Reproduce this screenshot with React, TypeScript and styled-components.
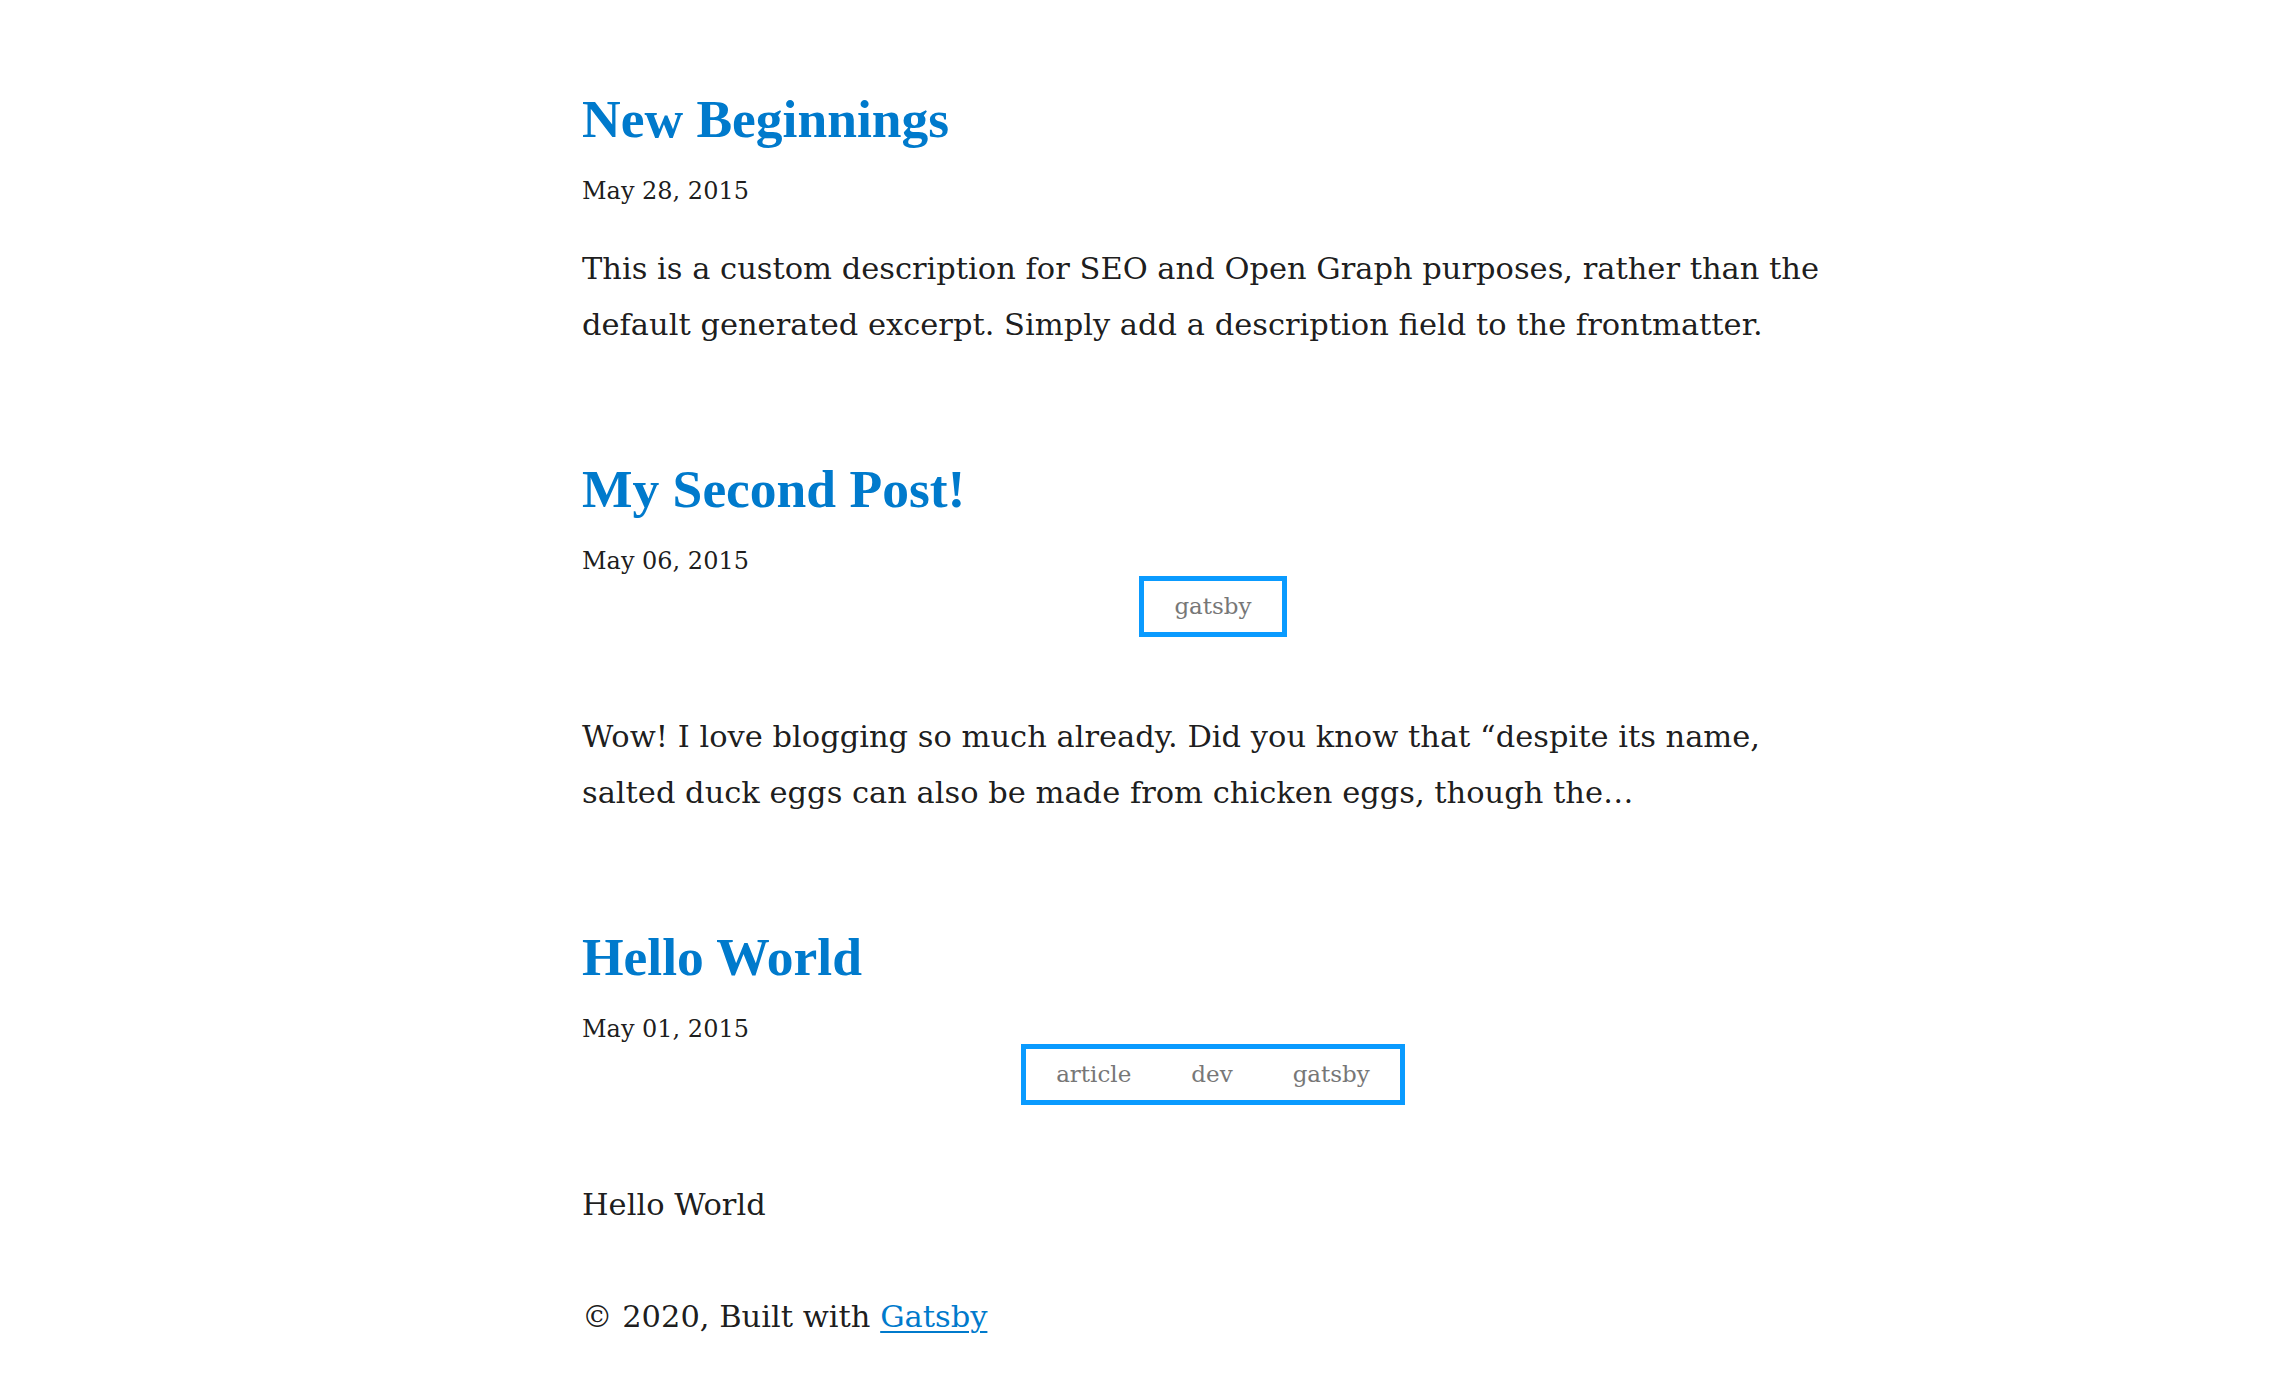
import styled, { createGlobalStyle } from "styled-components";

const posts = [
  {
    title: "New Beginnings",
    date: "May 28, 2015",
    tags: [] as string[],
    excerpt:
      "This is a custom description for SEO and Open Graph purposes, rather than the default generated excerpt. Simply add a description field to the frontmatter.",
  },
  {
    title: "My Second Post!",
    date: "May 06, 2015",
    tags: ["gatsby"],
    excerpt:
      "Wow! I love blogging so much already. Did you know that \u201cdespite its name, salted duck eggs can also be made from chicken eggs, though the\u2026",
  },
  {
    title: "Hello World",
    date: "May 01, 2015",
    tags: ["article", "dev", "gatsby"],
    excerpt: "Hello World",
  },
];

const GlobalStyle = createGlobalStyle`
  html, body {
    margin: 0;
    padding: 0;
    background: #ffffff;
  }
  body {
    font-family: "DejaVu Serif", "Liberation Serif", serif;
    color: rgba(0, 0, 0, 0.9);
  }
`;

const App = () => {
  return (
    <>
      <GlobalStyle />
      <Layout>
        <PostList>
          {posts.map((post) => (
            <Post key={post.title}>
              <PostTitle href="#">{post.title}</PostTitle>
              <PostDate>{post.date}</PostDate>
              {post.tags.length > 0 && (
                <TagBox>
                  {post.tags.map((tag) => (
                    <Tag key={tag}>{tag}</Tag>
                  ))}
                </TagBox>
              )}
              <Excerpt $tight={post.tags.length > 0}>{post.excerpt}</Excerpt>
            </Post>
          ))}
        </PostList>

        <Footer>
          © 2020, Built with <FooterLink href="#">Gatsby</FooterLink>
        </Footer>
      </Layout>
    </>
  );
};

export default App;

const Layout = styled.main`
  width: 1262px;
  margin-left: 582px;
  padding-top: 87px;
`;

const PostList = styled.div`
  display: flex;
  flex-direction: column;
  gap: 104px;
`;

const Post = styled.article`
  display: flex;
  flex-direction: column;
  align-items: flex-start;
`;

const PostTitle = styled.a`
  font-family: "Liberation Serif", "Times New Roman", serif;
  font-size: 53.5px;
  font-weight: 700;
  line-height: 64px;
  color: #007acc;
  text-decoration: none;
`;

const PostDate = styled.small`
  margin-top: 26px;
  font-size: 24px;
  line-height: 28px;
  color: rgba(0, 0, 0, 0.9);
`;

const TagBox = styled.ul`
  align-self: center;
  display: flex;
  margin: 1px 0 0;
  padding: 0;
  list-style: none;
  border: 5px solid #0a9bff;
`;

const Tag = styled.li`
  padding: 0 30px;
  font-size: 23px;
  line-height: 51px;
  color: #777777;
`;

const Excerpt = styled.p<{ $tight: boolean }>`
  margin: ${(p) => (p.$tight ? "72px" : "36px")} 0 0;
  font-size: 30.5px;
  line-height: 56px;
`;

const Footer = styled.footer`
  margin-top: 56px;
  padding-bottom: 40px;
  font-size: 30.5px;
  line-height: 56px;
`;

const FooterLink = styled.a`
  color: #007acc;
  text-decoration: underline;
  text-decoration-thickness: 2px;
  text-underline-offset: 4px;
`;
